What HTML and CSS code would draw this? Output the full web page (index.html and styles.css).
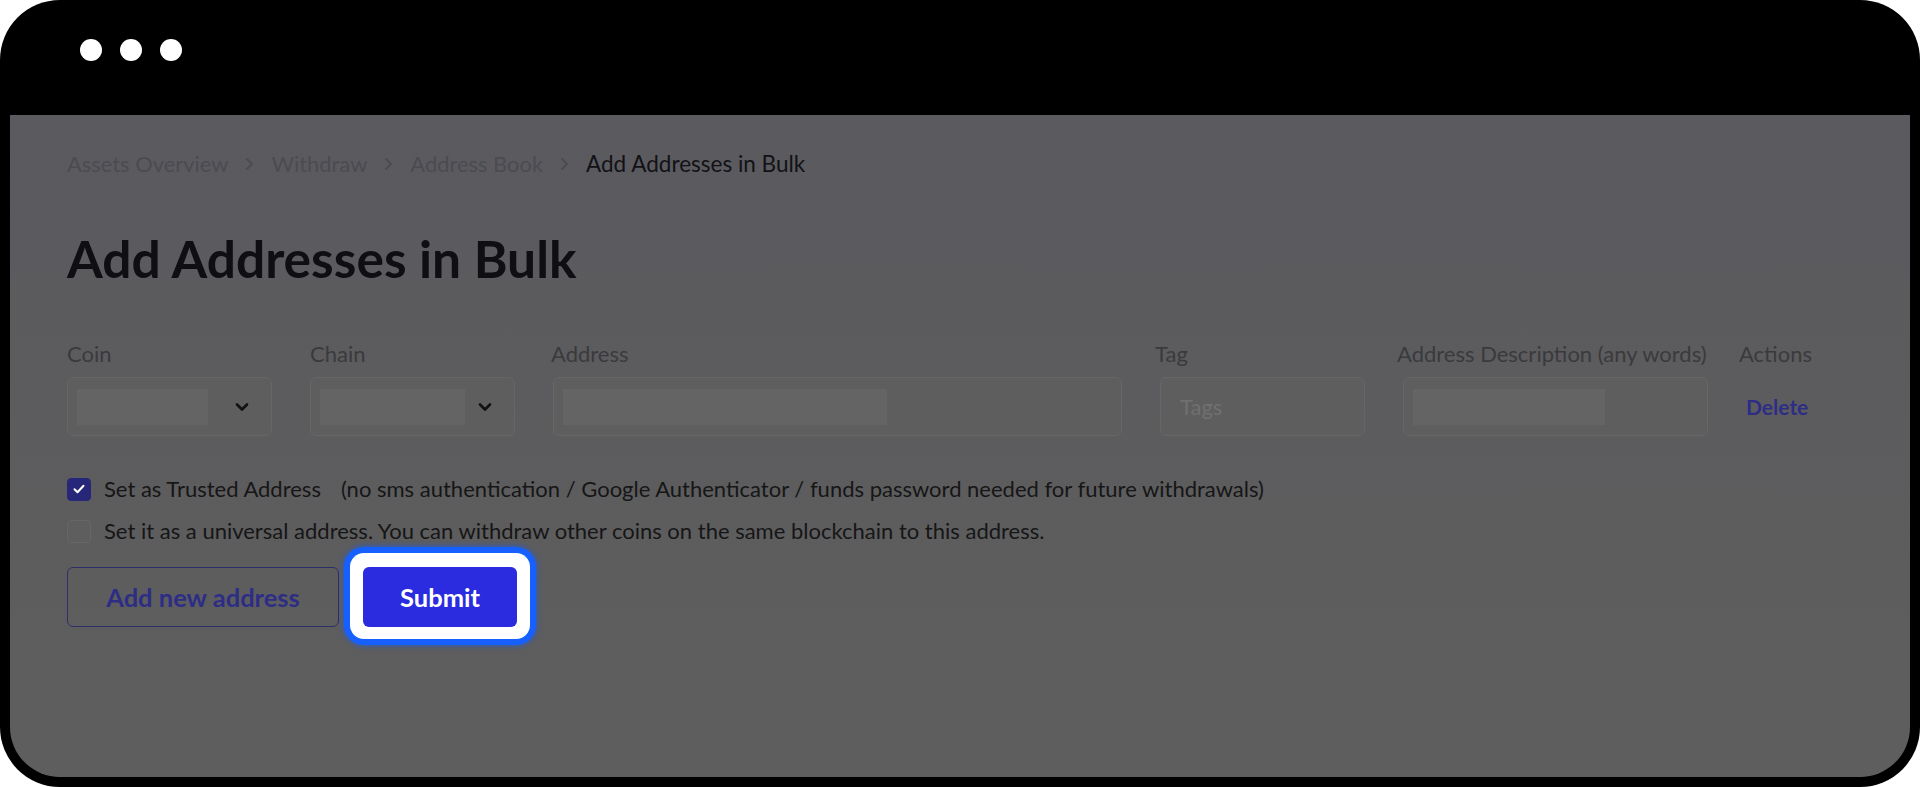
FILE: index.html
```html
<!DOCTYPE html>
<html lang="en">
<head>
<meta charset="utf-8">
<title>Add Addresses in Bulk</title>
<link rel="stylesheet" href="styles.css">
</head>
<body>
<div class="frame">
  <div class="titlebar">
    <span class="dot"></span><span class="dot"></span><span class="dot"></span>
  </div>
  <main class="screen">
    <nav class="crumbs">
      <span class="crumb">Assets Overview</span>
      <svg class="sep" viewBox="0 0 9 14" width="9" height="14"><path d="M2 2l5 5-5 5" fill="none" stroke="currentColor" stroke-width="2" stroke-linecap="round" stroke-linejoin="round"/></svg>
      <span class="crumb">Withdraw</span>
      <svg class="sep" viewBox="0 0 9 14" width="9" height="14"><path d="M2 2l5 5-5 5" fill="none" stroke="currentColor" stroke-width="2" stroke-linecap="round" stroke-linejoin="round"/></svg>
      <span class="crumb">Address Book</span>
      <svg class="sep" viewBox="0 0 9 14" width="9" height="14"><path d="M2 2l5 5-5 5" fill="none" stroke="currentColor" stroke-width="2" stroke-linecap="round" stroke-linejoin="round"/></svg>
      <span class="crumb current">Add Addresses in Bulk</span>
    </nav>

    <h1 class="title">Add Addresses in Bulk</h1>

    <div class="table">
      <div class="head">
        <div class="label">Coin</div>
        <div class="label">Chain</div>
        <div class="label">Address</div>
        <div class="label">Tag</div>
        <div class="label">Address Description (any words)</div>
        <div class="label">Actions</div>
      </div>

      <div class="row">
        <div class="field select">
          <span class="skel skel-coin"></span>
          <svg class="chev" viewBox="0 0 14 10" width="14" height="10"><path d="M2 2.5l5 5 5-5" fill="none" stroke="currentColor" stroke-width="2.6" stroke-linecap="round" stroke-linejoin="round"/></svg>
        </div>
        <div class="field select">
          <span class="skel skel-chain"></span>
          <svg class="chev" viewBox="0 0 14 10" width="14" height="10"><path d="M2 2.5l5 5 5-5" fill="none" stroke="currentColor" stroke-width="2.6" stroke-linecap="round" stroke-linejoin="round"/></svg>
        </div>
        <div class="field"><span class="skel skel-address"></span></div>
        <div class="field"><span class="placeholder">Tags</span></div>
        <div class="field"><span class="skel skel-desc"></span></div>
        <div class="cell-action"><span class="delete">Delete</span></div>
      </div>
    </div>

    <div class="checks">
      <label class="check-row">
        <span class="box checked">
          <svg viewBox="0 0 16 16" width="16" height="16"><path d="M3.5 8.2l3 3 6-6.4" fill="none" stroke="#fff" stroke-width="2" stroke-linecap="round" stroke-linejoin="round"/></svg>
        </span>
        <span class="check-text">Set as Trusted Address</span>
        <span class="check-note">(no sms authentication / Google Authenticator / funds password needed for future withdrawals)</span>
      </label>
      <label class="check-row">
        <span class="box"></span>
        <span class="check-text">Set it as a universal address. You can withdraw other coins on the same blockchain to this address.</span>
      </label>
    </div>

    <div class="buttons">
      <button class="btn btn-outline">Add new address</button>
      <div class="spot">
        <button class="btn btn-primary">Submit</button>
      </div>
    </div>
  </main>
</div>
</body>
</html>
```

FILE: styles.css
```css
html, body {
  margin: 0;
  padding: 0;
  background: #ffffff;
}

body {
  width: 1920px;
  height: 787px;
  overflow: hidden;
  font-family: Lato, "Noto Sans", sans-serif;
}

.frame {
  box-sizing: border-box;
  height: 787px;
  background: #000000;
  border-radius: 60px;
  padding: 0 10px 10px;
  display: flex;
  flex-direction: column;
}

.titlebar {
  height: 115px;
  flex: 0 0 115px;
  display: flex;
  align-items: flex-start;
  gap: 18px;
  padding: 39px 0 0 70px;
  box-sizing: border-box;
}

.dot {
  width: 22px;
  height: 22px;
  border-radius: 50%;
  background: #ffffff;
}

.screen {
  flex: 1;
  background: linear-gradient(180deg, #5a5a5f 0%, #5c5c5e 40%, #5e5e5e 100%);
  border-radius: 0 0 50px 50px;
  padding: 36px 0 0 57px;
  display: flex;
  flex-direction: column;
  align-items: flex-start;
}

.crumbs {
  display: flex;
  align-items: center;
  gap: 15px;
  height: 26px;
  font-size: 21.9px;
  line-height: 26px;
  color: #4b4b50;
}

.sep {
  color: #4b4b50;
  margin: 0 2px;
}

.crumb.current {
  color: #121216;
  font-size: 22.5px;
}

.title {
  margin: 51px 0 0;
  font-size: 51.5px;
  line-height: 60px;
  font-weight: 700;
  color: #0e0e13;
}

.table {
  margin-top: 53px;
  display: flex;
  flex-direction: column;
  gap: 11px;
}

.head {
  display: grid;
  grid-template-columns: 243px 241px 604px 242px 342px auto;
  height: 25px;
}

.row {
  display: grid;
  grid-template-columns: 205px 205px 569px 205px 305px auto;
  column-gap: 38px;
  height: 59px;
}

.label {
  font-size: 22px;
  line-height: 25px;
  color: #3a3a3c;
  white-space: nowrap;
}

.field {
  box-sizing: border-box;
  height: 59px;
  border: 1.5px solid #666666;
  border-radius: 6px;
  background: #5e5e5e;
  display: flex;
  align-items: center;
  padding: 0 9px;
}

.select {
  justify-content: space-between;
  padding-right: 22px;
}

.skel {
  display: block;
  height: 36px;
  background: #646464;
}

.skel-coin { width: 131px; }
.skel-chain { width: 145px; }
.skel-address { width: 324px; }
.skel-desc { width: 192px; }

.chev {
  color: #111111;
}

.placeholder {
  font-size: 22px;
  color: #707070;
  padding-left: 10px;
}

.cell-action {
  display: flex;
  align-items: center;
}

.delete {
  font-size: 21px;
  font-weight: 700;
  color: #2d2d86;
}

.checks {
  margin-top: 41px;
  display: flex;
  flex-direction: column;
  gap: 18px;
}

.check-row {
  display: flex;
  align-items: center;
  height: 24px;
  font-size: 22px;
  line-height: 24px;
  color: #161616;
}

.box {
  box-sizing: border-box;
  width: 24px;
  height: 23px;
  border-radius: 4px;
  border: 1.5px solid #666666;
  background: #5e5e5e;
  margin-right: 13px;
  display: flex;
  align-items: center;
  justify-content: center;
}

.box.checked {
  background: #27277a;
  border-color: #27277a;
}

.check-note {
  margin-left: 20px;
}

.buttons {
  margin-top: 24px;
  display: flex;
  align-items: center;
  gap: 24px;
}

.btn {
  box-sizing: border-box;
  height: 60px;
  border-radius: 6px;
  font-family: Lato, "Noto Sans", sans-serif;
  font-size: 25.5px;
  font-weight: 700;
  cursor: pointer;
}

.btn-outline {
  width: 272px;
  background: transparent;
  border: 1.5px solid #2e2e68;
  color: #2d2d86;
}

.spot {
  margin: -14px -13px -12px;
  padding: 14px 13px 12px;
  background: #ffffff;
  border-radius: 14px;
  box-shadow: 0 0 0 6px #1560ff, 0 0 4px 8px rgba(20, 90, 255, 0.45);
}

.btn-primary {
  display: block;
  width: 154px;
  background: #2b2be0;
  border: none;
  color: #ffffff;
}
```
